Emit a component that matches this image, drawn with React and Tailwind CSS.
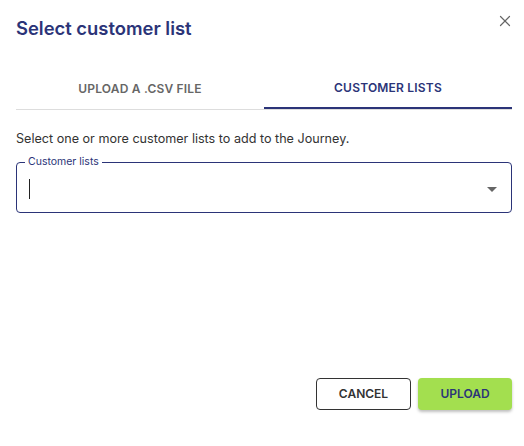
import { X } from 'lucide-react';

export default function App() {
  return (
    <div className="w-[524px] h-[446px] bg-white flex flex-col pl-4 pr-3 font-['Inter',sans-serif] text-[#333]">
      {/* Header */}
      <div className="flex items-start justify-between pt-[16px]">
        <h2 className="text-[18.4px] font-semibold text-[#2b3478] leading-[24px]">Select customer list</h2>
        <button className="mt-[-4px] mr-[-2px] text-[#666]">
          <X size={18} strokeWidth={1.6} />
        </button>
      </div>

      {/* Tabs */}
      <div className="mt-[29px] flex border-b border-[#ddd]">
        <div className="flex-1 h-[40px] flex items-center justify-center text-[12px] font-semibold text-[#666] tracking-[0.2px]">
          UPLOAD A .CSV FILE
        </div>
        <div className="flex-1 h-[40px] flex items-center justify-center text-[12px] font-semibold text-[#2b3478] tracking-[0.2px] border-b-2 border-[#2b3478] mb-[-1px]">
          CUSTOMER LISTS
        </div>
      </div>

      <p className="mt-[21px] text-[12.6px] leading-[16px] text-[#333]">
        Select one or more customer lists to add to the Journey.
      </p>

      {/* Field */}
      <fieldset className="mt-[9px] h-[57px] border border-[#2b3478] rounded-[4px] px-[8px] relative">
        <legend className="px-[3px] text-[10.5px] leading-[12px] text-[#2b3478]">Customer lists</legend>
        <div className="flex items-center h-[42px] pl-[4px] pr-[6px]">
          <span className="w-px h-[20px] bg-[#222]" />
          <span className="ml-auto w-0 h-0 border-l-[5px] border-r-[5px] border-t-[5px] border-l-transparent border-r-transparent border-t-[#666]" />
        </div>
      </fieldset>

      {/* Actions */}
      <div className="mt-auto mb-[36px] flex justify-end gap-[7px]">
        <button className="w-[95px] h-[32px] border border-[#333] rounded-[4px] text-[12px] font-semibold text-[#333]">
          CANCEL
        </button>
        <button className="w-[94px] h-[32px] rounded-[4px] bg-[#a3df4f] text-[12px] font-semibold text-[#2b3478] shadow-[0_2px_3px_rgba(0,0,0,0.25)]">
          UPLOAD
        </button>
      </div>
    </div>
  );
}
